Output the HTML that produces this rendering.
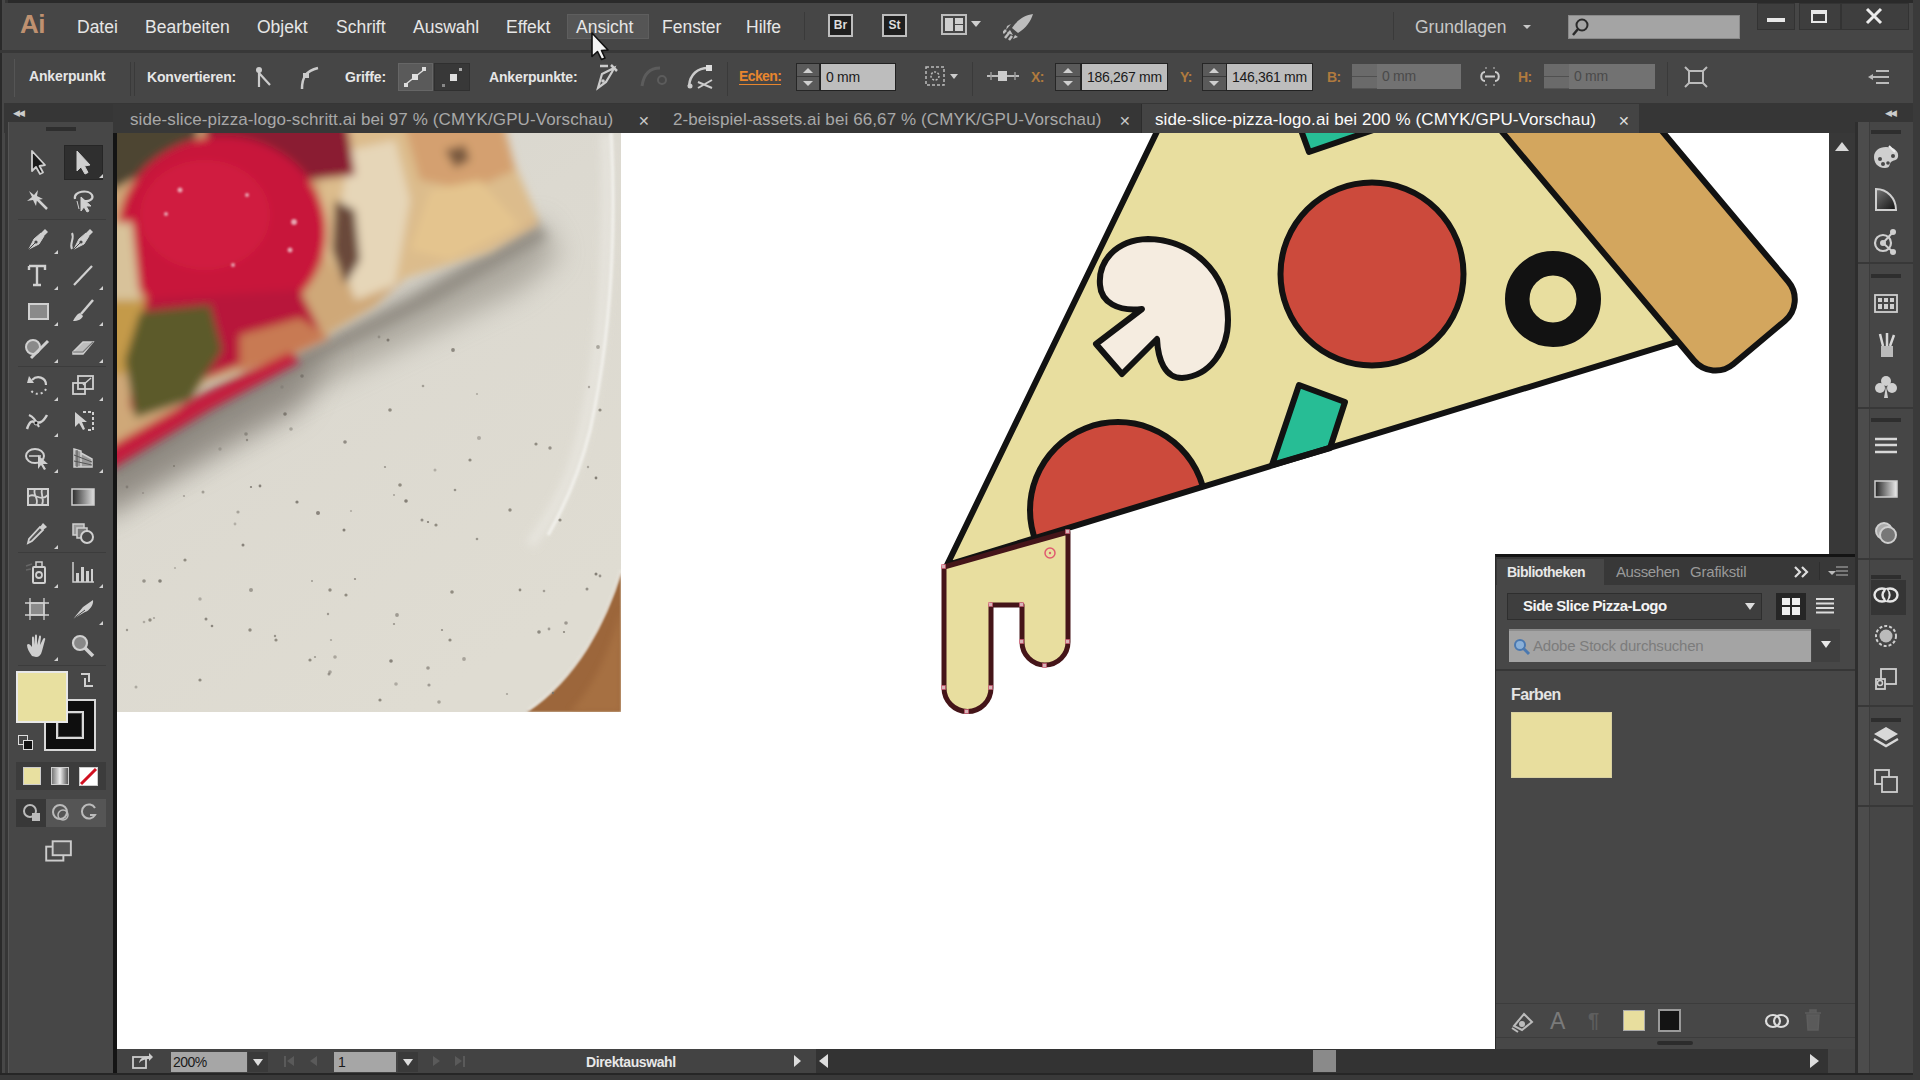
<!DOCTYPE html>
<html><head><meta charset="utf-8">
<style>
*{margin:0;padding:0;box-sizing:border-box}
html,body{width:1920px;height:1080px;overflow:hidden;background:#464646;font-family:"Liberation Sans",sans-serif;color:#e8e8e8}
.a{position:absolute}
.mn{position:absolute;top:17px;font-size:17.5px;line-height:20px;color:#e6e6e6;letter-spacing:0px}
.cb{position:absolute;top:69px;font-size:14px;line-height:16px;color:#e6e6e6;font-weight:bold;letter-spacing:-0.15px}
.tab{position:absolute;top:110px;font-size:17px;line-height:20px;color:#a8a8a8;letter-spacing:0.1px}
.inp{position:absolute;background:#bdbdbd;color:#1a1a1a;font-size:14px;line-height:16px;padding-left:5px;padding-top:5px;letter-spacing:-0.3px;border:1px solid #222}
.spin{position:absolute;background:#5a5a5a;border:1px solid #262626;box-shadow:inset 0 12px 0 #5a5a5a, inset 0 13px 0 #3a3a3a}
.sep{position:absolute;width:2px;background:#3a3a3a;border-right:1px solid #505050}
</style></head><body>
<!-- top border -->
<div class="a" style="left:0;top:0;width:1920px;height:3px;background:#2a2a2a"></div>
<div class="a" style="left:0;top:0;width:8px;height:1080px;background:#474747;border-left:2px solid #2a2a2a;border-right:3px solid #363636"></div>
<!-- menu bar -->
<div class="a" style="left:4px;top:3px;width:1912px;height:47px;background:#464646"></div>
<div class="a" style="left:0;top:50px;width:1920px;height:3px;background:#383838"></div>
<!-- control bar -->
<div class="a" style="left:4px;top:53px;width:1912px;height:50px;background:#464646"></div>
<!-- tab strip -->
<div class="a" style="left:4px;top:103px;width:1912px;height:30px;background:#363636"></div>
<!-- canvas -->
<div class="a" style="left:117px;top:133px;width:1712px;height:916px;background:#fff"></div>

<!-- photo -->
<svg class="a" style="left:117px;top:133px" width="504" height="579" viewBox="117 133 504 579">
<defs>
<filter id="b3" x="-20%" y="-20%" width="140%" height="140%"><feGaussianBlur stdDeviation="3"/></filter>
<filter id="b4" x="-20%" y="-20%" width="140%" height="140%"><feGaussianBlur stdDeviation="4"/></filter>
<filter id="b6" x="-20%" y="-20%" width="140%" height="140%"><feGaussianBlur stdDeviation="6"/></filter>
<filter id="b14" x="-30%" y="-30%" width="160%" height="160%"><feGaussianBlur stdDeviation="14"/></filter>
<filter id="b1"><feGaussianBlur stdDeviation="1"/></filter>
<linearGradient id="pl" x1="0" y1="0" x2="0.6" y2="1"><stop offset="0" stop-color="#d6d4cc"/><stop offset="0.45" stop-color="#dcd9d0"/><stop offset="1" stop-color="#dfdcd2"/></linearGradient>
</defs>
<rect x="117" y="133" width="504" height="579" fill="url(#pl)"/>
<!-- shadow -->
<path d="M95,452 L210,390 L300,348 L400,296 L540,220 L560,255 L520,290 L420,338 L300,395 L210,445 L95,520 Z" fill="#8e897f" filter="url(#b14)" opacity="0.6"/>
<path d="M95,462 L210,398 L300,352 L410,298 L538,222 L548,238 L430,305 L310,365 L220,412 L95,485 Z" fill="#7a756c" filter="url(#b6)" opacity="0.55"/>
<path d="M95,450 L200,400 L290,360 L330,350 L300,410 L200,465 L95,520 Z" fill="#77716a" filter="url(#b14)" opacity="0.55"/>
<!-- wood -->
<path d="M621,572 C605,625 575,680 527,712 L621,712 Z" fill="#9c663a" filter="url(#b1)"/>
<path d="M621,610 C610,650 595,685 570,712 L621,712 Z" fill="#b07a4a" opacity="0.5" filter="url(#b3)"/><path d="M621,570 C606,622 576,678 528,710" fill="none" stroke="#eeece6" stroke-width="2.5" opacity="0.7" filter="url(#b1)"/>
<!-- rim -->
<path d="M611,133 C616,230 612,330 590,430 C580,470 565,505 548,535" fill="none" stroke="#f2f1ec" stroke-width="3.5" filter="url(#b1)"/>
<path d="M606,133 C610,260 602,380 572,470 C560,500 548,520 530,545" fill="none" stroke="#ebe9e3" stroke-width="10" filter="url(#b4)" opacity="0.7"/>
<!-- pizza food -->
<g filter="url(#b4)">
<path d="M95,110 L500,110 L514,163 L538,219 L538,225 L490,252 L406,278 L374,307 L291,356 L207,383 L130,446 L95,460 Z" fill="#cfa878"/>
<path d="M320,110 L500,110 L514,163 L538,219 L490,252 L406,278 L360,300 L320,250 Z" fill="#dcbc8c"/>
<path d="M350,150 L395,140 L410,200 L395,285 L355,300 L335,240 Z" fill="#e6d6b8"/>
<path d="M400,110 L500,110 L515,170 L470,190 L420,180 Z" fill="#d4a070"/>
<path d="M430,190 L480,180 L520,225 L450,260 L410,250 Z" fill="#e4c48e"/>
<path d="M445,150 L465,145 L470,160 L455,168 Z" fill="#7a5a40"/>
<path d="M95,110 L205,110 L185,168 L140,175 L95,200 Z" fill="#4e4430"/>
<path d="M200,110 L345,110 L355,175 L290,182 L210,150 Z" fill="#8a1a32"/>
<ellipse cx="222" cy="232" rx="104" ry="96" fill="#c8163a"/>
<ellipse cx="205" cy="215" rx="65" ry="55" fill="#d01e40"/>
<path d="M130,300 L300,290 L320,330 L280,350 L200,380 L130,410 Z" fill="#b8183a"/>
<path d="M335,200 L355,210 L360,260 L345,285 L332,250 Z" fill="#6a4a3a"/>
<path d="M95,225 L132,222 L140,300 L95,325 Z" fill="#d8c29a"/>
<path d="M95,300 L145,300 L138,370 L95,380 Z" fill="#c49a48"/>
<path d="M140,312 L210,305 L222,350 L190,400 L135,418 L125,360 Z" fill="#5c5a2a"/>
<path d="M240,335 L300,318 L330,338 L290,356 L240,372 Z" fill="#c87a52"/>
<path d="M95,455 L200,395 L290,352 L300,362 L210,410 L110,470 Z" fill="#c41e3c"/>
</g>
<g fill="#f4e0e0" opacity="0.7" filter="url(#b1)">
<circle cx="180" cy="190" r="2.5"/><circle cx="166" cy="214" r="2"/><circle cx="294" cy="222" r="3"/><circle cx="247" cy="195" r="2"/><circle cx="233" cy="265" r="2"/><circle cx="290" cy="250" r="2.5"/>
</g>
<g fill="#7e796e" opacity="0.8">
<circle cx="390" cy="410" r="1.8"/><circle cx="400" cy="485" r="1.8"/><circle cx="330" cy="590" r="1.7"/><circle cx="250" cy="630" r="1.7"/>
<circle cx="452" cy="592" r="1.8"/><circle cx="510" cy="510" r="1.7"/><circle cx="436" cy="525" r="1.6"/><circle cx="380" cy="700" r="1.6"/>
<circle cx="150" cy="620" r="1.7"/><circle cx="560" cy="520" r="1.6"/><circle cx="536" cy="444" r="1.6"/><circle cx="470" cy="460" r="1.6"/>
<circle cx="200" cy="680" r="1.6"/><circle cx="310" cy="660" r="1.6"/><circle cx="520" cy="590" r="1.4"/><circle cx="276" cy="640" r="1.6"/>
<circle cx="346" cy="595" r="1.6"/><circle cx="450" cy="640" r="1.6"/><circle cx="600" cy="410" r="1.6"/><circle cx="185" cy="560" r="1.6"/>
</g>
<g fill="#77726a"><circle cx="282" cy="387" r="1.7" opacity="0.44"/><circle cx="385" cy="467" r="1.1" opacity="0.65"/><circle cx="143" cy="493" r="1.1" opacity="0.45"/><circle cx="331" cy="640" r="1.1" opacity="0.51"/><circle cx="429" cy="685" r="1.6" opacity="0.60"/><circle cx="598" cy="347" r="1.9" opacity="0.54"/><circle cx="275" cy="636" r="1.2" opacity="0.69"/><circle cx="435" cy="470" r="1.5" opacity="0.43"/><circle cx="455" cy="490" r="1.3" opacity="0.69"/><circle cx="345" cy="442" r="1.8" opacity="0.75"/><circle cx="243" cy="545" r="1.5" opacity="0.84"/><circle cx="479" cy="438" r="2.0" opacity="0.46"/><circle cx="328" cy="614" r="1.2" opacity="0.64"/><circle cx="144" cy="581" r="1.8" opacity="0.69"/><circle cx="550" cy="448" r="1.7" opacity="0.70"/><circle cx="406" cy="501" r="1.8" opacity="0.87"/><circle cx="355" cy="579" r="1.1" opacity="0.75"/><circle cx="439" cy="702" r="1.8" opacity="0.54"/><circle cx="312" cy="581" r="1.0" opacity="0.63"/><circle cx="154" cy="618" r="1.1" opacity="0.52"/><circle cx="315" cy="657" r="1.1" opacity="0.62"/><circle cx="391" cy="661" r="1.8" opacity="0.83"/><circle cx="260" cy="486" r="1.4" opacity="0.84"/><circle cx="589" cy="387" r="1.2" opacity="0.52"/><circle cx="238" cy="512" r="1.6" opacity="0.53"/><circle cx="127" cy="487" r="1.4" opacity="0.68"/><circle cx="587" cy="589" r="1.5" opacity="0.71"/><circle cx="453" cy="350" r="1.9" opacity="0.79"/><circle cx="549" cy="629" r="1.4" opacity="0.60"/><circle cx="175" cy="568" r="1.1" opacity="0.43"/><circle cx="174" cy="466" r="1.0" opacity="0.84"/><circle cx="423" cy="386" r="1.3" opacity="0.57"/><circle cx="302" cy="376" r="1.8" opacity="0.90"/><circle cx="351" cy="511" r="1.1" opacity="0.45"/><circle cx="291" cy="429" r="1.8" opacity="0.48"/><circle cx="136" cy="687" r="1.5" opacity="0.47"/><circle cx="388" cy="340" r="1.5" opacity="0.89"/><circle cx="544" cy="591" r="1.3" opacity="0.58"/><circle cx="206" cy="619" r="1.5" opacity="0.79"/><circle cx="285" cy="414" r="1.8" opacity="0.89"/><circle cx="539" cy="632" r="1.8" opacity="0.77"/><circle cx="235" cy="524" r="1.4" opacity="0.41"/><circle cx="251" cy="590" r="2.0" opacity="0.62"/><circle cx="588" cy="467" r="1.2" opacity="0.51"/><circle cx="428" cy="668" r="1.8" opacity="0.64"/><circle cx="442" cy="630" r="1.1" opacity="0.73"/><circle cx="566" cy="623" r="1.8" opacity="0.64"/><circle cx="212" cy="626" r="1.3" opacity="0.80"/><circle cx="596" cy="478" r="1.4" opacity="0.87"/><circle cx="477" cy="394" r="1.1" opacity="0.48"/><circle cx="564" cy="632" r="1.1" opacity="0.81"/><circle cx="600" cy="576" r="1.4" opacity="0.67"/><circle cx="596" cy="574" r="1.5" opacity="0.87"/><circle cx="335" cy="657" r="1.8" opacity="0.51"/><circle cx="247" cy="440" r="1.2" opacity="0.69"/><circle cx="251" cy="487" r="1.1" opacity="0.86"/><circle cx="297" cy="502" r="1.6" opacity="0.85"/><circle cx="329" cy="674" r="1.5" opacity="0.67"/><circle cx="379" cy="337" r="1.4" opacity="0.49"/><circle cx="127" cy="630" r="1.2" opacity="0.64"/><circle cx="477" cy="539" r="1.3" opacity="0.66"/><circle cx="394" cy="624" r="1.1" opacity="0.68"/><circle cx="246" cy="434" r="1.8" opacity="0.65"/><circle cx="397" cy="615" r="1.9" opacity="0.62"/><circle cx="422" cy="520" r="1.5" opacity="0.75"/><circle cx="344" cy="530" r="1.5" opacity="0.87"/><circle cx="464" cy="659" r="1.9" opacity="0.53"/><circle cx="396" cy="684" r="1.8" opacity="0.47"/><circle cx="184" cy="496" r="1.1" opacity="0.52"/><circle cx="160" cy="581" r="1.8" opacity="0.85"/><circle cx="200" cy="599" r="1.7" opacity="0.47"/><circle cx="553" cy="693" r="1.2" opacity="0.88"/><circle cx="318" cy="513" r="2.0" opacity="0.82"/><circle cx="203" cy="492" r="1.5" opacity="0.57"/><circle cx="220" cy="449" r="1.7" opacity="0.41"/><circle cx="394" cy="495" r="1.0" opacity="0.57"/><circle cx="428" cy="522" r="1.1" opacity="0.89"/><circle cx="507" cy="694" r="1.1" opacity="0.53"/><circle cx="144" cy="622" r="1.3" opacity="0.46"/><circle cx="330" cy="672" r="1.8" opacity="0.53"/></g>
</svg>
<!-- pizza art -->
<svg class="a" style="left:0;top:0" width="1920" height="1080" viewBox="0 0 1920 1080">
<defs>
<clipPath id="cv"><rect x="117" y="133" width="1712" height="916"/></clipPath>
<clipPath id="ch"><path d="M947,565 L1182,80 L1460,80 L1720,328.6 Z"/></clipPath>
</defs>
<g clip-path="url(#cv)" stroke="#121212" stroke-linejoin="round">
<path d="M947,565 L1182,80 L1460,80 L1720,328.6 Z" fill="#e8de9f" stroke="none"/>
<g clip-path="url(#ch)"><circle cx="1118" cy="510" r="88" fill="#cc4a3c" stroke-width="6"/></g>
<path d="M1299,385 L1345,402 L1330,448 L1272,465 Z" fill="#27bd95" stroke-width="6"/>
<path d="M1309,152 L1290,100 L1461,100 Z" fill="#27bd95" stroke-width="6"/>
<path d="M1142,309 L1096,344 L1122,374 L1157,339 C1158,360 1165,378 1182,378 C1210,376 1228,350 1228,320 C1228,270 1190,240 1148,239 C1115,240 1098,262 1100,285 C1101,302 1118,312 1142,309 Z" fill="#f5ece0" stroke-width="6"/>
<circle cx="1372" cy="274" r="91.5" fill="#cc4a3c" stroke-width="6"/>
<circle cx="1553" cy="299" r="35.75" fill="none" stroke-width="24.5"/>
<path d="M947,565 L1182,80 M947,565 L1720,328.6" fill="none" stroke-width="6" stroke-linecap="round"/>
<g transform="translate(1712,382) rotate(-40)"><rect x="0" y="-420" width="123" height="420" rx="28" fill="#d3a65e" stroke-width="6"/></g>
<path d="M944,567 L1068,532 L1068,642 A23,23 0 0 1 1022,642 L1022,605 L991,605 L991,688 A23.5,23.5 0 0 1 944,688 Z" fill="#e8de9f" stroke="#451519" stroke-width="5"/>
<g fill="#f0d0d4" stroke="#d86078" stroke-width="0.8" opacity="0.85">
<rect x="941.5" y="564.5" width="4" height="4"/><rect x="1065.5" y="529.5" width="4" height="4"/>
<rect x="1065.5" y="639.5" width="4" height="4"/><rect x="1042.5" y="663.5" width="4" height="4"/>
<rect x="1019.5" y="639.5" width="4" height="4"/><rect x="1019.5" y="602.5" width="4" height="4"/>
<rect x="988.5" y="602.5" width="4" height="4"/><rect x="988.5" y="685.5" width="4" height="4"/>
<rect x="964.5" y="709.5" width="4" height="4"/><rect x="941.5" y="685.5" width="4" height="4"/>
</g>
<circle cx="1050" cy="553" r="5" fill="none" stroke="#e05a70" stroke-width="1.5"/>
<circle cx="1050" cy="553" r="1.2" fill="#e05a70" stroke="none"/>
</g>
</svg>
<!-- vertical scrollbar -->
<div class="a" style="left:1829px;top:133px;width:28px;height:916px;background:#383838"></div>
<!-- status bar -->
<div class="a" style="left:113px;top:1049px;width:1744px;height:24px;background:#333"></div>
<div class="a" style="left:0;top:1073px;width:1920px;height:7px;background:#393939;border-top:2px solid #262626"></div>
<!-- right strip -->
<div class="a" style="left:1857px;top:122px;width:56px;height:951px;background:#464646"></div>
<div class="a" style="left:1913px;top:0;width:7px;height:1080px;background:#3a3a3a"></div>
<!-- left toolbar -->
<div class="a" style="left:8px;top:122px;width:105px;height:951px;background:#474747;border-left:1px solid #555"></div>


<!-- ===== LIBRARIES PANEL ===== -->
<div class="a" style="left:1495px;top:554px;width:360px;height:495px;background:#474747;border-top:3px solid #141414;border-left:1px solid #2a2a2a"></div>
<div class="a" style="left:1496px;top:557px;width:359px;height:28px;background:#383838"></div>
<div class="a" style="left:1497px;top:559px;width:107px;height:26px;background:#474747"></div>
<div class="a" style="left:1507px;top:564px;font-size:14px;font-weight:bold;color:#e8e8e8;letter-spacing:-0.5px">Bibliotheken</div>
<div class="a" style="left:1616px;top:563px;font-size:15px;color:#9a9a9a;letter-spacing:-0.4px">Aussehen</div>
<div class="a" style="left:1690px;top:563px;font-size:15px;color:#9a9a9a;letter-spacing:-0.2px">Grafikstil</div>
<svg class="a" style="left:1792px;top:565px" width="18" height="14" viewBox="0 0 18 14"><path d="M3,2 L8,7 L3,12 M10,2 L15,7 L10,12" fill="none" stroke="#ddd" stroke-width="2.2"/></svg>
<div class="a" style="left:1819px;top:562px;width:1px;height:18px;background:#2e2e2e"></div>
<div class="a" style="left:1828px;top:571px;border-left:4px solid transparent;border-right:4px solid transparent;border-top:4px solid #bbb"></div>
<div class="a" style="left:1836px;top:566px;width:12px;height:2px;background:#777;box-shadow:0 4px 0 #777,0 8px 0 #777"></div>
<!-- dropdown -->
<div class="a" style="left:1507px;top:593px;width:255px;height:27px;background:#3e3e3e;border:1px solid #2e2e2e"></div>
<div class="a" style="left:1523px;top:597px;font-size:15px;font-weight:bold;color:#f4f4f4;letter-spacing:-0.5px">Side Slice Pizza-Logo</div>
<div class="a" style="left:1745px;top:603px;border-left:5px solid transparent;border-right:5px solid transparent;border-top:7px solid #ddd"></div>
<div class="a" style="left:1776px;top:593px;width:30px;height:27px;background:#262626"></div>
<svg class="a" style="left:1781px;top:597px" width="20" height="19" viewBox="0 0 20 19"><rect x="1" y="1" width="8" height="7" fill="#eee"/><rect x="11" y="1" width="8" height="7" fill="#eee"/><rect x="1" y="10" width="8" height="8" fill="#eee"/><rect x="11" y="10" width="8" height="8" fill="#eee"/></svg>
<svg class="a" style="left:1815px;top:597px" width="20" height="19" viewBox="0 0 20 19"><path d="M1,2 L19,2 M1,6.5 L19,6.5 M1,11 L19,11 M1,15.5 L19,15.5" stroke="#ddd" stroke-width="2"/></svg>
<!-- search -->
<div class="a" style="left:1509px;top:629px;width:302px;height:33px;background:#a4a4a4;border-top:2px solid #8c8c8c"></div>
<svg class="a" style="left:1512px;top:637px" width="20" height="20" viewBox="0 0 20 20"><circle cx="8" cy="8" r="5" fill="#8ab0d8" stroke="#4a78b0" stroke-width="2"/><path d="M11,11 L17,17" stroke="#4a78b0" stroke-width="3"/></svg>
<div class="a" style="left:1533px;top:637px;font-size:15px;color:#7c7c7c;letter-spacing:-0.2px">Adobe Stock durchsuchen</div>
<div class="a" style="left:1812px;top:629px;width:28px;height:33px;background:#404040"></div>
<div class="a" style="left:1821px;top:641px;border-left:5px solid transparent;border-right:5px solid transparent;border-top:7px solid #e8e8e8"></div>
<div class="a" style="left:1496px;top:669px;width:359px;height:2px;background:#363636"></div>
<div class="a" style="left:1511px;top:686px;font-size:16px;font-weight:bold;color:#e4e4e4;letter-spacing:-0.6px">Farben</div>
<div class="a" style="left:1511px;top:712px;width:101px;height:66px;background:#e8de9e;border:1px solid #d8d0a0"></div>
<!-- panel bottom -->
<div class="a" style="left:1496px;top:1003px;width:359px;height:1px;background:#3c3c3c"></div>
<svg class="a" style="left:1510px;top:1008px" width="26" height="26" viewBox="0 0 26 26"><path d="M4,18 L14,6 L22,14 L12,22 Z" fill="none" stroke="#bbb" stroke-width="2"/><circle cx="12" cy="16" r="3" fill="#bbb"/><path d="M2,20 L8,24" stroke="#bbb" stroke-width="2"/></svg>
<div class="a" style="left:1550px;top:1008px;font-size:23px;color:#7a7a7a">A</div>
<div class="a" style="left:1588px;top:1009px;font-size:20px;color:#5e5e5e;font-weight:bold">&#182;</div>
<div class="a" style="left:1623px;top:1010px;width:22px;height:21px;background:#e8de9e;border:1px solid #aaa"></div>
<div class="a" style="left:1658px;top:1009px;width:23px;height:23px;background:#141414;border:2px solid #9a9a9a"></div>
<svg class="a" style="left:1763px;top:1007px" width="28" height="26" viewBox="0 0 28 26"><ellipse cx="10" cy="14" rx="7" ry="6" fill="none" stroke="#ddd" stroke-width="2.2"/><ellipse cx="18" cy="14" rx="7" ry="6" fill="none" stroke="#ddd" stroke-width="2.2"/></svg>
<svg class="a" style="left:1802px;top:1007px" width="22" height="26" viewBox="0 0 22 26"><path d="M5,8 L17,8 L16,23 L6,23 Z M3,6 L19,6 M8,6 L8,3 L14,3 L14,6" fill="#5a5a5a" stroke="#5e5e5e" stroke-width="1.5"/></svg>
<div class="a" style="left:1496px;top:1037px;width:359px;height:1px;background:#3c3c3c"></div>
<div class="a" style="left:1657px;top:1041px;width:36px;height:4px;background:#2c2c2c;border-radius:2px"></div>

<!-- ===== RIGHT STRIP ===== -->
<div class="a" style="left:1855px;top:122px;width:3px;height:951px;background:#2e2e2e"></div>
<div class="a" style="left:1858px;top:122px;width:12px;height:951px;background:#4c4c4c;border-right:1px solid #3c3c3c"></div>
<div class="a" style="left:1871px;top:130px;width:30px;height:4px;background:#2e2e2e"></div>
<div class="a" style="left:1871px;top:274px;width:30px;height:4px;background:#2e2e2e"></div>
<div class="a" style="left:1871px;top:418px;width:30px;height:4px;background:#2e2e2e"></div>
<div class="a" style="left:1858px;top:262px;width:55px;height:2px;background:#383838"></div>
<div class="a" style="left:1858px;top:407px;width:55px;height:2px;background:#383838"></div>
<div class="a" style="left:1858px;top:558px;width:55px;height:2px;background:#383838"></div>
<div class="a" style="left:1871px;top:575px;width:30px;height:4px;background:#2e2e2e"></div>
<div class="a" style="left:1858px;top:705px;width:55px;height:2px;background:#383838"></div>
<div class="a" style="left:1871px;top:718px;width:30px;height:4px;background:#2e2e2e"></div>
<div class="a" style="left:1858px;top:805px;width:55px;height:2px;background:#383838"></div>
<div class="a" style="left:1871px;top:580px;width:35px;height:35px;background:#353535"></div>
<svg class="a" style="left:1871px;top:142px" width="30" height="30" viewBox="0 0 30 30"><path d="M15,5 C24,5 28,10 27,15 C26,19 22,18 20,20 C18,23 19,26 14,26 C6,26 3,20 3,15 C3,9 8,5 15,5 Z" fill="#cfcfcf"/><circle cx="9" cy="17" r="2" fill="#474747"/><circle cx="12" cy="22" r="2" fill="#474747"/><circle cx="17" cy="21" r="1.8" fill="#474747"/><circle cx="22" cy="14" r="2" fill="#474747"/><path d="M18,4 L24,10" stroke="#eee" stroke-width="2"/></svg>
<svg class="a" style="left:1871px;top:185px" width="30" height="30" viewBox="0 0 30 30"><defs><linearGradient id="rg" x1="0" y1="0" x2="1" y2="1"><stop offset="0" stop-color="#777"/><stop offset="1" stop-color="#111"/></linearGradient></defs><path d="M5,4 C16,4 25,13 25,25 L5,25 Z" fill="url(#rg)" stroke="#cfcfcf" stroke-width="2"/></svg>
<svg class="a" style="left:1871px;top:226px" width="30" height="30" viewBox="0 0 30 30"><circle cx="12" cy="17" r="8" fill="none" stroke="#cfcfcf" stroke-width="2.2"/><circle cx="12" cy="17" r="3" fill="#cfcfcf"/><path d="M12,17 L22,6 M12,17 L22,26" stroke="#cfcfcf" stroke-width="2"/><circle cx="22" cy="6" r="3" fill="#cfcfcf"/><circle cx="22" cy="26" r="3" fill="#cfcfcf"/></svg>
<svg class="a" style="left:1871px;top:288px" width="30" height="30" viewBox="0 0 30 30"><rect x="4" y="7" width="22" height="17" fill="none" stroke="#cfcfcf" stroke-width="1.8"/><rect x="7" y="10" width="4" height="4" fill="#cfcfcf"/><rect x="13" y="10" width="4" height="4" fill="#cfcfcf"/><rect x="19" y="10" width="4" height="4" fill="#cfcfcf"/><rect x="7" y="16" width="4" height="5" fill="#cfcfcf"/><rect x="13" y="16" width="4" height="5" fill="#cfcfcf"/><rect x="19" y="16" width="4" height="5" fill="#cfcfcf"/></svg>
<svg class="a" style="left:1871px;top:330px" width="30" height="30" viewBox="0 0 30 30"><rect x="10" y="16" width="12" height="11" fill="#bbb"/><path d="M12,16 L9,4 M16,16 L16,3 M19,16 L23,5" stroke="#d8d8d8" stroke-width="2.5"/></svg>
<svg class="a" style="left:1871px;top:372px" width="30" height="30" viewBox="0 0 30 30"><circle cx="15" cy="9" r="5" fill="#cfcfcf"/><circle cx="9" cy="16" r="5" fill="#cfcfcf"/><circle cx="21" cy="16" r="5" fill="#cfcfcf"/><path d="M15,14 L13,26 L17,26 Z" fill="#cfcfcf"/></svg>
<svg class="a" style="left:1871px;top:431px" width="30" height="30" viewBox="0 0 30 30"><path d="M4,8 L26,8 M4,14 L26,14 M4,21 L26,21" stroke="#d8d8d8" stroke-width="2.5"/></svg>
<svg class="a" style="left:1871px;top:474px" width="30" height="30" viewBox="0 0 30 30"><defs><linearGradient id="rg2"><stop offset="0" stop-color="#222"/><stop offset="1" stop-color="#eee"/></linearGradient></defs><rect x="4" y="7" width="22" height="16" fill="url(#rg2)" stroke="#cfcfcf" stroke-width="1.5"/></svg>
<svg class="a" style="left:1871px;top:518px" width="30" height="30" viewBox="0 0 30 30"><circle cx="13" cy="13" r="8" fill="#aaa" stroke="#cfcfcf" stroke-width="2"/><circle cx="17" cy="17" r="8" fill="#777" stroke="#cfcfcf" stroke-width="2"/></svg>
<svg class="a" style="left:1871px;top:580px" width="30" height="30" viewBox="0 0 30 30"><ellipse cx="11" cy="15" rx="7.5" ry="6.5" fill="none" stroke="#e6e6e6" stroke-width="2.4"/><ellipse cx="19" cy="15" rx="7.5" ry="6.5" fill="none" stroke="#e6e6e6" stroke-width="2.4"/><path d="M15,10 C17,12 17,18 15,20" fill="none" stroke="#353535" stroke-width="2"/></svg>
<svg class="a" style="left:1871px;top:621px" width="30" height="30" viewBox="0 0 30 30"><circle cx="15" cy="15" r="10" fill="none" stroke="#cfcfcf" stroke-width="2" stroke-dasharray="3,2"/><circle cx="15" cy="15" r="6.5" fill="#bbb"/></svg>
<svg class="a" style="left:1871px;top:664px" width="30" height="30" viewBox="0 0 30 30"><rect x="10" y="5" width="15" height="15" fill="none" stroke="#cfcfcf" stroke-width="1.8"/><rect x="5" y="15" width="9" height="10" fill="#474747" stroke="#cfcfcf" stroke-width="1.8"/><circle cx="9" cy="19" r="2.5" fill="none" stroke="#cfcfcf" stroke-width="1.5"/></svg>
<svg class="a" style="left:1871px;top:723px" width="30" height="30" viewBox="0 0 30 30"><path d="M15,4 L27,11 L15,18 L3,11 Z" fill="#d8d8d8"/><path d="M3,16 L15,23 L27,16" fill="none" stroke="#d8d8d8" stroke-width="2.5"/></svg>
<svg class="a" style="left:1871px;top:766px" width="30" height="30" viewBox="0 0 30 30"><rect x="4" y="4" width="14" height="14" fill="none" stroke="#cfcfcf" stroke-width="1.8"/><rect x="11" y="11" width="15" height="15" fill="#474747" stroke="#cfcfcf" stroke-width="1.8"/></svg>

<!-- vertical scroll arrow -->
<div class="a" style="left:1835px;top:142px;border-left:7px solid transparent;border-right:7px solid transparent;border-bottom:9px solid #d8d8d8"></div>

<!-- ===== STATUS BAR ===== -->
<div class="a" style="left:117px;top:1049px;width:699px;height:24px;background:#434343"></div><div class="a" style="left:113px;top:133px;width:4px;height:940px;background:#141414"></div>
<svg class="a" style="left:130px;top:1051px" width="24" height="20" viewBox="0 0 24 20"><rect x="3" y="6" width="13" height="11" fill="none" stroke="#ccc" stroke-width="1.8"/><path d="M9,12 C10,7 14,5 19,5 L19,2 L23,6 L19,10 L19,8 C15,8 12,9 9,12 Z" fill="#ccc"/></svg>
<div class="a" style="left:171px;top:1052px;width:76px;height:20px;background:#a6a6a6"></div>
<div class="a" style="left:173px;top:1054px;font-size:14px;color:#1a1a1a;letter-spacing:-0.5px">200%</div>
<div class="a" style="left:248px;top:1052px;width:20px;height:20px;background:#3a3a3a"></div>
<div class="a" style="left:253px;top:1059px;border-left:5px solid transparent;border-right:5px solid transparent;border-top:7px solid #ddd"></div>
<div class="a" style="left:284px;top:1056px;width:2px;height:11px;background:#5a5a5a"></div>
<div class="a" style="left:287px;top:1056px;border-top:5.5px solid transparent;border-bottom:5.5px solid transparent;border-right:7px solid #5a5a5a"></div>
<div class="a" style="left:310px;top:1056px;border-top:5.5px solid transparent;border-bottom:5.5px solid transparent;border-right:7px solid #5a5a5a"></div>
<div class="a" style="left:334px;top:1052px;width:62px;height:20px;background:#a6a6a6"></div>
<div class="a" style="left:338px;top:1054px;font-size:14px;color:#1a1a1a">1</div>
<div class="a" style="left:398px;top:1052px;width:20px;height:20px;background:#3a3a3a"></div>
<div class="a" style="left:403px;top:1059px;border-left:5px solid transparent;border-right:5px solid transparent;border-top:7px solid #ddd"></div>
<div class="a" style="left:433px;top:1056px;border-top:5.5px solid transparent;border-bottom:5.5px solid transparent;border-left:7px solid #5a5a5a"></div>
<div class="a" style="left:455px;top:1056px;border-top:5.5px solid transparent;border-bottom:5.5px solid transparent;border-left:7px solid #5a5a5a"></div>
<div class="a" style="left:463px;top:1056px;width:2px;height:11px;background:#5a5a5a"></div>
<div class="a" style="left:586px;top:1054px;font-size:14px;font-weight:bold;color:#e8e8e8;letter-spacing:-0.4px">Direktauswahl</div>
<div class="a" style="left:794px;top:1055px;border-top:6px solid transparent;border-bottom:6px solid transparent;border-left:7px solid #ddd"></div>
<div class="a" style="left:816px;top:1049px;width:1px;height:24px;background:#333"></div>
<div class="a" style="left:819px;top:1054px;border-top:7px solid transparent;border-bottom:7px solid transparent;border-right:9px solid #ddd"></div>
<div class="a" style="left:1313px;top:1050px;width:23px;height:22px;background:#8a8a8a"></div>
<div class="a" style="left:1810px;top:1054px;border-top:7px solid transparent;border-bottom:7px solid transparent;border-left:9px solid #ddd"></div>
<div class="a" style="left:1828px;top:1049px;width:27px;height:24px;background:#444"></div>
<!-- ===== MENU BAR ===== -->
<div class="a" style="left:20px;top:9px;font-size:26px;line-height:30px;color:#bf9170;font-weight:bold;letter-spacing:-0.5px">Ai</div>
<div class="mn" style="left:77px">Datei</div>
<div class="mn" style="left:145px">Bearbeiten</div>
<div class="mn" style="left:257px">Objekt</div>
<div class="mn" style="left:336px">Schrift</div>
<div class="mn" style="left:413px">Auswahl</div>
<div class="mn" style="left:506px">Effekt</div>
<div class="a" style="left:567px;top:14px;width:82px;height:25px;background:#555;border:1px solid #5e5e5e"></div>
<div class="mn" style="left:576px">Ansicht</div>
<div class="mn" style="left:662px">Fenster</div>
<div class="mn" style="left:746px">Hilfe</div>
<div class="a" style="left:804px;top:12px;width:1px;height:28px;background:#3a3a3a"></div>
<div class="a" style="left:828px;top:14px;width:25px;height:23px;border:2px solid #bdbdbd;background:#1e1e1e;color:#ddd;font-size:12px;font-weight:bold;text-align:center;line-height:19px">Br</div>
<div class="a" style="left:882px;top:14px;width:25px;height:23px;border:2px solid #bdbdbd;background:#1e1e1e;color:#ddd;font-size:12px;font-weight:bold;text-align:center;line-height:19px">St</div>
<div class="a" style="left:941px;top:14px;width:26px;height:21px;border:2px solid #bdbdbd;background:#464646"></div>
<div class="a" style="left:945px;top:18px;width:8px;height:13px;background:#cfcfcf"></div>
<div class="a" style="left:955px;top:18px;width:8px;height:6px;background:#cfcfcf"></div>
<div class="a" style="left:955px;top:25px;width:8px;height:6px;background:#cfcfcf"></div>
<div class="a" style="left:971px;top:21px;width:0;height:0;border-left:5px solid transparent;border-right:5px solid transparent;border-top:6px solid #cfcfcf"></div>
<svg class="a" style="left:1003px;top:12px" width="34" height="30" viewBox="0 0 34 30"><path d="M30,2 C22,3 14,8 9,16 L15,21 C23,16 28,9 30,2 Z M7,18 L4,21 L10,23 Z M12,23 L10,27 L15,25 Z M4,14 L8,12 L3,18 Z" fill="#bdbdbd"/><path d="M6,21 L2,26 M9,24 L6,28 M3,18 L0,21" stroke="#bdbdbd" stroke-width="2.5"/></svg>
<div class="a" style="left:1393px;top:12px;width:1px;height:28px;background:#3a3a3a"></div>
<div class="mn" style="left:1415px;color:#c8c8c8">Grundlagen</div>
<div class="a" style="left:1523px;top:25px;width:0;height:0;border-left:4px solid transparent;border-right:4px solid transparent;border-top:4px solid #c8c8c8"></div>
<div class="a" style="left:1568px;top:15px;width:172px;height:24px;background:#a4a4a4;border:1px solid #8a8a8a"></div>
<svg class="a" style="left:1569px;top:15px" width="24" height="24" viewBox="0 0 24 24"><circle cx="13" cy="10" r="5.5" fill="none" stroke="#2a2a2a" stroke-width="2"/><path d="M9,14 L4,20" stroke="#2a2a2a" stroke-width="2.5"/></svg>
<div class="a" style="left:1757px;top:3px;width:38px;height:27px;background:#3e3e3e;border:1px solid #333"></div>
<div class="a" style="left:1767px;top:18px;width:18px;height:4px;background:#e8e8e8"></div>
<div class="a" style="left:1799px;top:3px;width:42px;height:27px;background:#3e3e3e;border:1px solid #333"></div>
<div class="a" style="left:1811px;top:10px;width:16px;height:13px;border:2px solid #e8e8e8;border-top-width:4px"></div>
<div class="a" style="left:1841px;top:3px;width:68px;height:27px;background:#3e3e3e;border:1px solid #333"></div>
<svg class="a" style="left:1864px;top:7px" width="20" height="18" viewBox="0 0 20 18"><path d="M3,2 L17,16 M17,2 L3,16" stroke="#ececec" stroke-width="3"/></svg>

<!-- ===== CONTROL BAR ===== -->
<div class="a" style="left:14px;top:59px;width:1px;height:38px;background:#555"></div>
<div class="cb" style="left:29px;top:68px">Ankerpunkt</div>
<div class="a" style="left:130px;top:62px;width:1px;height:34px;background:#3a3a3a"></div>
<div class="a" style="left:134px;top:62px;width:1px;height:34px;background:#3a3a3a"></div>
<div class="cb" style="left:147px">Konvertieren:</div>
<svg class="a" style="left:250px;top:63px" width="26" height="28" viewBox="0 0 26 28"><circle cx="9" cy="7" r="3" fill="#ccc"/><path d="M9,7 L9,24 M9,10 L20,22" stroke="#ccc" stroke-width="2.2"/></svg>
<svg class="a" style="left:296px;top:63px" width="26" height="28" viewBox="0 0 26 28"><path d="M6,26 C6,14 10,8 22,5" fill="none" stroke="#ccc" stroke-width="2.5"/><rect x="7" y="10" width="6" height="5" fill="#ccc"/></svg>
<div class="cb" style="left:345px">Griffe:</div>
<div class="a" style="left:398px;top:63px;width:35px;height:28px;background:#5a5a5a;border:1px solid #666"></div>
<svg class="a" style="left:398px;top:63px" width="35" height="28" viewBox="0 0 35 28"><rect x="14" y="11" width="6" height="6" fill="#e0e0e0"/><path d="M8,21 L27,6" stroke="#ddd" stroke-width="1.5"/><rect x="24" y="4" width="4" height="4" fill="#ddd"/><rect x="6" y="20" width="4" height="4" fill="#ddd"/></svg>
<div class="a" style="left:434px;top:63px;width:36px;height:28px;background:#383838;border:1px solid #303030"></div>
<svg class="a" style="left:434px;top:63px" width="36" height="28" viewBox="0 0 36 28"><rect x="16" y="11" width="7" height="7" fill="#e0e0e0"/><rect x="25" y="5" width="3" height="3" fill="#aaa"/><rect x="8" y="21" width="3" height="3" fill="#888"/></svg>
<div class="cb" style="left:489px">Ankerpunkte:</div>
<svg class="a" style="left:592px;top:62px" width="28" height="30" viewBox="0 0 28 30"><path d="M22,6 L10,12 L6,26 L14,20 L20,10 Z" fill="none" stroke="#ccc" stroke-width="2.2"/><path d="M8,4 L16,4 M19,3 L25,9" stroke="#ccc" stroke-width="2.5"/><circle cx="11" cy="19" r="1.8" fill="#ccc"/></svg>
<svg class="a" style="left:638px;top:62px" width="30" height="30" viewBox="0 0 30 30"><path d="M4,24 C6,10 14,6 22,6" fill="none" stroke="#5c5c5c" stroke-width="3"/><circle cx="24" cy="18" r="4" fill="none" stroke="#5c5c5c" stroke-width="2"/></svg>
<svg class="a" style="left:684px;top:62px" width="32" height="30" viewBox="0 0 32 30"><path d="M5,24 C6,12 14,6 24,6" fill="none" stroke="#ccc" stroke-width="2.5"/><rect x="22" y="3" width="6" height="6" fill="#ddd"/><circle cx="6" cy="24" r="2.5" fill="#ccc"/><path d="M14,20 L28,26 M14,26 L28,18" stroke="#ccc" stroke-width="2"/></svg>
<div class="a" style="left:727px;top:62px;width:1px;height:34px;background:#3a3a3a"></div>
<div class="a" style="left:739px;top:68px;font-size:14px;font-weight:bold;color:#e8862e;letter-spacing:-0.6px;border-bottom:1px solid #e8862e;line-height:16px">Ecken:</div>
<div class="spin" style="left:796px;top:63px;width:24px;height:28px"></div>
<div class="a" style="left:803px;top:68px;border-left:5px solid transparent;border-right:5px solid transparent;border-bottom:5px solid #cfcfcf"></div>
<div class="a" style="left:803px;top:81px;border-left:5px solid transparent;border-right:5px solid transparent;border-top:5px solid #cfcfcf"></div>
<div class="inp" style="left:820px;top:63px;width:76px;height:28px">0 mm</div>
<svg class="a" style="left:922px;top:63px" width="42" height="28" viewBox="0 0 42 28"><rect x="4" y="4" width="18" height="18" fill="none" stroke="#bbb" stroke-width="1.5" stroke-dasharray="3,2"/><circle cx="13" cy="13" r="4" fill="none" stroke="#bbb" stroke-width="1.5" stroke-dasharray="2,1.5"/><path d="M28,11 L36,11 L32,16 Z" fill="#ccc"/></svg>
<div class="a" style="left:972px;top:62px;width:1px;height:34px;background:#3a3a3a"></div>
<svg class="a" style="left:985px;top:64px" width="36" height="24" viewBox="0 0 36 24"><path d="M2,12 L34,12" stroke="#bbb" stroke-width="2"/><rect x="13" y="7" width="9" height="10" fill="#ccc"/><path d="M6,8 L6,16 M30,8 L30,16" stroke="#999" stroke-width="1.5"/></svg>
<div class="a" style="left:1031px;top:68px;font-size:14px;font-weight:bold;color:#b07a3e;letter-spacing:-0.6px;line-height:18px">X:</div>
<div class="spin" style="left:1055px;top:63px;width:26px;height:28px"></div>
<div class="a" style="left:1063px;top:68px;border-left:5px solid transparent;border-right:5px solid transparent;border-bottom:5px solid #cfcfcf"></div>
<div class="a" style="left:1063px;top:81px;border-left:5px solid transparent;border-right:5px solid transparent;border-top:5px solid #cfcfcf"></div>
<div class="inp" style="left:1081px;top:63px;width:87px;height:28px">186,267 mm</div>
<div class="a" style="left:1180px;top:68px;font-size:14px;font-weight:bold;color:#b07a3e;letter-spacing:-0.6px;line-height:18px">Y:</div>
<div class="spin" style="left:1202px;top:63px;width:25px;height:28px"></div>
<div class="a" style="left:1209px;top:68px;border-left:5px solid transparent;border-right:5px solid transparent;border-bottom:5px solid #cfcfcf"></div>
<div class="a" style="left:1209px;top:81px;border-left:5px solid transparent;border-right:5px solid transparent;border-top:5px solid #cfcfcf"></div>
<div class="inp" style="left:1226px;top:63px;width:87px;height:28px">146,361 mm</div>
<div class="a" style="left:1327px;top:68px;font-size:14px;font-weight:bold;color:#b07a3e;letter-spacing:-0.6px;line-height:18px">B:</div>
<div class="a" style="left:1352px;top:64px;width:25px;height:25px;background:#6a6a6a;border-bottom:1px solid #555"></div><div class="a" style="left:1352px;top:76px;width:25px;height:1px;background:#505050"></div>
<div class="inp" style="left:1377px;top:64px;width:84px;height:25px;background:#727272;color:#4a4a4a;border:none;padding-top:4px">0 mm</div>
<svg class="a" style="left:1476px;top:64px" width="28" height="26" viewBox="0 0 28 26"><path d="M9,8 C4,8 4,17 9,17 M19,8 C24,8 24,17 19,17 M9,12.5 L19,12.5" fill="none" stroke="#ccc" stroke-width="2"/><path d="M10,3 L10,5 M18,3 L18,5 M10,20 L10,22 M18,20 L18,22" stroke="#999" stroke-width="1.5"/></svg>
<div class="a" style="left:1518px;top:68px;font-size:14px;font-weight:bold;color:#b07a3e;letter-spacing:-0.6px;line-height:18px">H:</div>
<div class="a" style="left:1544px;top:64px;width:25px;height:25px;background:#6a6a6a;border-bottom:1px solid #555"></div><div class="a" style="left:1544px;top:76px;width:25px;height:1px;background:#505050"></div>
<div class="inp" style="left:1569px;top:64px;width:86px;height:25px;background:#727272;color:#4a4a4a;border:none;padding-top:4px">0 mm</div>
<div class="a" style="left:1667px;top:62px;width:1px;height:34px;background:#3a3a3a"></div>
<svg class="a" style="left:1682px;top:64px" width="28" height="26" viewBox="0 0 28 26"><rect x="7" y="7" width="14" height="12" fill="none" stroke="#bbb" stroke-width="2"/><path d="M3,3 L8,8 M25,3 L20,8 M3,23 L8,18 M25,23 L20,18" stroke="#bbb" stroke-width="2"/></svg>
<svg class="a" style="left:1866px;top:66px" width="26" height="22" viewBox="0 0 26 22"><path d="M10,5 L23,5 M4,11 L23,11 M10,17 L23,17" stroke="#bbb" stroke-width="2"/><path d="M2,11 L7,8 L7,14 Z" fill="#bbb"/></svg>

<!-- ===== TAB STRIP ===== -->
<div class="a" style="left:13px;top:108px;color:#ccc;font-size:9px;letter-spacing:-2px">&#9664;&#9664;</div>
<div class="a" style="left:1885px;top:108px;color:#ccc;font-size:9px;letter-spacing:-2px">&#9664;&#9664;</div>
<div class="a" style="left:113px;top:104px;width:547px;height:29px;background:#383838"></div>
<div class="tab" style="left:130px">side-slice-pizza-logo-schritt.ai bei 97 % (CMYK/GPU-Vorschau)</div>
<div class="tab" style="left:638px;font-size:14px;color:#c8c8c8;top:111px">&#x2715;</div>
<div class="tab" style="left:673px">2-beispiel-assets.ai bei 66,67 % (CMYK/GPU-Vorschau)</div>
<div class="tab" style="left:1119px;font-size:14px;color:#c8c8c8;top:111px">&#x2715;</div>
<div class="a" style="left:1141px;top:104px;width:498px;height:29px;background:#444;border-left:1px solid #2c2c2c"></div>
<div class="tab" style="left:1155px;color:#fafafa">side-slice-pizza-logo.ai bei 200 % (CMYK/GPU-Vorschau)</div>
<div class="tab" style="left:1618px;font-size:14px;color:#ddd;top:111px">&#x2715;</div>
<!-- ===== LEFT TOOLBAR ===== -->
<div class="a" style="left:46px;top:127px;width:30px;height:4px;background:#2e2e2e"></div>
<div class="a" style="left:64px;top:145px;width:39px;height:35px;background:#2f2f2f;border:1px solid #262626"></div>
<svg class="a" style="left:24px;top:148px" width="28" height="28" viewBox="0 0 28 28"><path d="M8,3 L8,23 L12,19 L16,26 L19,24.5 L15.5,18 L21,17 Z" fill="#1a1a1a" stroke="#cfcfcf" stroke-width="1.8" stroke-linejoin="round"/></svg>
<svg class="a" style="left:69px;top:148px" width="28" height="28" viewBox="0 0 28 28"><path d="M8,3 L8,23 L12,19 L16,26 L19,24.5 L15.5,18 L21,17 Z" fill="#cfcfcf" stroke="#cfcfcf" stroke-width="1" stroke-linejoin="round"/></svg>
<div class="a" style="left:99px;top:174px;border-left:4px solid transparent;border-bottom:4px solid #d0d0d0"></div>
<svg class="a" style="left:23px;top:185px" width="28" height="28" viewBox="0 0 28 28"><path d="M6,6 L9,12 L4,16 L10,15 L13,21 L14,15 L20,14 L14,11 L15,5 L11,10 Z" fill="#d0d0d0"/><path d="M14,14 L24,24" stroke="#d0d0d0" stroke-width="2.5"/></svg>
<svg class="a" style="left:69px;top:185px" width="28" height="28" viewBox="0 0 28 28"><path d="M6,14 C4,6 20,4 23,10 C25,14 20,17 15,16" fill="none" stroke="#d0d0d0" stroke-width="2.2"/><path d="M8,16 L10,24 M12,12 L12,26 L15,22 L18,27 L20,26 L17,21 L22,21 Z" fill="#d0d0d0" stroke="#d0d0d0" stroke-width="1"/></svg>
<div class="a" style="left:18px;top:219px;width:88px;height:1px;background:#3c3c3c"></div>
<svg class="a" style="left:24px;top:225px" width="28" height="28" viewBox="0 0 28 28"><path d="M21,4 L24,7 L20,11 L17,8 Z" fill="#d0d0d0"/><path d="M17,8 L20,11 L15,19 L5,24 L10,14 Z" fill="#cfcfcf" stroke="#cfcfcf" stroke-width="1"/><circle cx="12" cy="17" r="1.6" fill="#474747"/><path d="M5,24 L12,17" stroke="#474747" stroke-width="1"/></svg>
<svg class="a" style="left:69px;top:225px" width="28" height="28" viewBox="0 0 28 28"><path d="M21,4 L24,7 L20,11 L17,8 Z" fill="#d0d0d0"/><path d="M17,8 L20,11 L15,19 L5,24 L10,14 Z" fill="#cfcfcf" stroke="#cfcfcf" stroke-width="1"/><circle cx="12" cy="17" r="1.6" fill="#474747"/><path d="M5,24 L12,17" stroke="#474747" stroke-width="1"/><path d="M3,24 C0,18 6,14 3,8" fill="none" stroke="#cfcfcf" stroke-width="2"/></svg>
<div class="a" style="left:54px;top:250px;border-left:4px solid transparent;border-bottom:4px solid #d0d0d0"></div>
<svg class="a" style="left:23px;top:261px" width="28" height="28" viewBox="0 0 28 28"><path d="M6,5 L22,5 L22,9 M6,5 L6,9 M14,5 L14,24 M10,24 L18,24" fill="none" stroke="#d0d0d0" stroke-width="2.4"/></svg>
<svg class="a" style="left:69px;top:261px" width="28" height="28" viewBox="0 0 28 28"><path d="M5,24 L23,5" stroke="#d0d0d0" stroke-width="2.2"/></svg>
<div class="a" style="left:54px;top:286px;border-left:4px solid transparent;border-bottom:4px solid #d0d0d0"></div>
<div class="a" style="left:99px;top:286px;border-left:4px solid transparent;border-bottom:4px solid #d0d0d0"></div>
<svg class="a" style="left:24px;top:297px" width="28" height="28" viewBox="0 0 28 28"><rect x="5" y="7" width="19" height="15" fill="#8a8a8a" stroke="#d0d0d0" stroke-width="2"/></svg>
<svg class="a" style="left:69px;top:297px" width="28" height="28" viewBox="0 0 28 28"><path d="M24,3 L12,17" stroke="#d0d0d0" stroke-width="2.5"/><path d="M11,16 C8,17 6,20 4,24 C9,24 13,22 14,19 Z" fill="#d0d0d0"/></svg>
<div class="a" style="left:54px;top:322px;border-left:4px solid transparent;border-bottom:4px solid #d0d0d0"></div>
<div class="a" style="left:99px;top:322px;border-left:4px solid transparent;border-bottom:4px solid #d0d0d0"></div>
<svg class="a" style="left:23px;top:334px" width="28" height="28" viewBox="0 0 28 28"><circle cx="10" cy="13" r="7" fill="#8a8a8a" stroke="#d0d0d0" stroke-width="2"/><path d="M8,24 L25,7" stroke="#d0d0d0" stroke-width="3"/></svg>
<svg class="a" style="left:69px;top:334px" width="28" height="28" viewBox="0 0 28 28"><path d="M4,18 L14,8 L24,8 L14,20 L4,20 Z" fill="#bdbdbd" stroke="#d0d0d0" stroke-width="1.5"/><path d="M4,18 L14,18 L24,8" stroke="#777" stroke-width="1.2" fill="none"/></svg>
<div class="a" style="left:54px;top:359px;border-left:4px solid transparent;border-bottom:4px solid #d0d0d0"></div>
<div class="a" style="left:99px;top:359px;border-left:4px solid transparent;border-bottom:4px solid #d0d0d0"></div>
<div class="a" style="left:18px;top:366px;width:88px;height:1px;background:#3c3c3c"></div>
<svg class="a" style="left:24px;top:371px" width="28" height="28" viewBox="0 0 28 28"><path d="M8,9 C13,4 22,6 22,14" fill="none" stroke="#d0d0d0" stroke-width="2.2"/><path d="M5,5 L10,12 L3,12 Z" fill="#d0d0d0"/><path d="M22,18 A9,9 0 0 1 6,18" fill="none" stroke="#d0d0d0" stroke-width="2" stroke-dasharray="2,3"/></svg>
<svg class="a" style="left:69px;top:371px" width="28" height="28" viewBox="0 0 28 28"><rect x="4" y="12" width="12" height="11" fill="none" stroke="#d0d0d0" stroke-width="1.8"/><rect x="9" y="5" width="15" height="13" fill="none" stroke="#d0d0d0" stroke-width="1.8"/><path d="M14,14 L22,7" stroke="#d0d0d0" stroke-width="1.5"/></svg>
<div class="a" style="left:54px;top:397px;border-left:4px solid transparent;border-bottom:4px solid #d0d0d0"></div>
<div class="a" style="left:99px;top:397px;border-left:4px solid transparent;border-bottom:4px solid #d0d0d0"></div>
<svg class="a" style="left:23px;top:407px" width="28" height="28" viewBox="0 0 28 28"><path d="M4,22 C10,4 14,26 24,8" fill="none" stroke="#d0d0d0" stroke-width="2.5"/><path d="M6,8 C10,10 12,12 16,20" fill="none" stroke="#d0d0d0" stroke-width="2"/><circle cx="13" cy="16" r="2" fill="#1e1e1e" stroke="#d0d0d0"/></svg>
<svg class="a" style="left:69px;top:407px" width="28" height="28" viewBox="0 0 28 28"><path d="M6,5 L6,20 L10,16 L14,23 L16,22 L13,15 L18,15 Z" fill="#d0d0d0"/><path d="M14,5 L24,5 L24,23 L17,23" fill="none" stroke="#d0d0d0" stroke-width="2" stroke-dasharray="3,2"/></svg>
<div class="a" style="left:54px;top:433px;border-left:4px solid transparent;border-bottom:4px solid #d0d0d0"></div>
<svg class="a" style="left:23px;top:443px" width="28" height="28" viewBox="0 0 28 28"><ellipse cx="12" cy="13" rx="9" ry="7" fill="none" stroke="#d0d0d0" stroke-width="2"/><path d="M6,13 L18,13" stroke="#d0d0d0" stroke-width="1.5"/><path d="M15,12 L15,26 L18,22 L21,27 L23,26 L20,21 L25,21 Z" fill="#d0d0d0"/></svg>
<svg class="a" style="left:69px;top:443px" width="28" height="28" viewBox="0 0 28 28"><path d="M5,24 L5,6 L12,8 L12,24 Z M12,10 L23,16 L23,24 L12,24" fill="#999" stroke="#d0d0d0" stroke-width="1.5"/><path d="M5,12 L23,19 M5,18 L23,22 M8,7 L8,24" stroke="#555" stroke-width="1"/></svg>
<div class="a" style="left:54px;top:469px;border-left:4px solid transparent;border-bottom:4px solid #d0d0d0"></div>
<div class="a" style="left:99px;top:469px;border-left:4px solid transparent;border-bottom:4px solid #d0d0d0"></div>
<svg class="a" style="left:24px;top:483px" width="28" height="28" viewBox="0 0 28 28"><rect x="4" y="6" width="20" height="16" fill="#555" stroke="#d0d0d0" stroke-width="2"/><path d="M4,14 C10,8 16,20 24,12 M11,6 C8,12 16,16 12,22 M18,6 C16,12 21,16 18,22" fill="none" stroke="#d0d0d0" stroke-width="1.8"/></svg>
<svg class="a" style="left:70px;top:486px" width="26" height="22" viewBox="0 0 26 22"><defs><linearGradient id="tg"><stop offset="0" stop-color="#2a2a2a"/><stop offset="1" stop-color="#e0e0e0"/></linearGradient></defs><rect x="2" y="3" width="22" height="16" fill="url(#tg)" stroke="#cfcfcf" stroke-width="1.5"/></svg>
<svg class="a" style="left:23px;top:519px" width="28" height="28" viewBox="0 0 28 28"><path d="M20,4 L24,8 L20,11 L17,8 Z" fill="#d0d0d0"/><path d="M17,8 L20,11 L9,22 L5,24 L6,20 Z" fill="#555" stroke="#d0d0d0" stroke-width="1.8"/></svg>
<svg class="a" style="left:69px;top:519px" width="28" height="28" viewBox="0 0 28 28"><rect x="4" y="5" width="11" height="11" fill="#999" stroke="#d0d0d0" stroke-width="1.5"/><rect x="8" y="9" width="10" height="10" fill="#777" stroke="#d0d0d0" stroke-width="1.5"/><circle cx="18" cy="18" r="6" fill="#474747" stroke="#d0d0d0" stroke-width="2"/></svg>
<div class="a" style="left:54px;top:545px;border-left:4px solid transparent;border-bottom:4px solid #d0d0d0"></div>
<div class="a" style="left:18px;top:552px;width:88px;height:1px;background:#3c3c3c"></div>
<svg class="a" style="left:24px;top:558px" width="28" height="28" viewBox="0 0 28 28"><rect x="9" y="9" width="12" height="16" rx="1" fill="none" stroke="#d0d0d0" stroke-width="2"/><rect x="12" y="4" width="6" height="5" fill="none" stroke="#d0d0d0" stroke-width="1.5"/><circle cx="15" cy="17" r="3" fill="none" stroke="#d0d0d0" stroke-width="1.8"/><path d="M2,8 L8,6 M2,12 L7,11" stroke="#666" stroke-width="1.5"/></svg>
<svg class="a" style="left:69px;top:558px" width="28" height="28" viewBox="0 0 28 28"><path d="M4,4 L4,24 L25,24" fill="none" stroke="#d0d0d0" stroke-width="1.5"/><rect x="7" y="15" width="3" height="9" fill="#d0d0d0"/><rect x="12" y="9" width="3" height="15" fill="#d0d0d0"/><rect x="17" y="13" width="3" height="11" fill="#d0d0d0"/><rect x="22" y="11" width="2" height="13" fill="#d0d0d0"/></svg>
<div class="a" style="left:54px;top:584px;border-left:4px solid transparent;border-bottom:4px solid #d0d0d0"></div>
<div class="a" style="left:99px;top:584px;border-left:4px solid transparent;border-bottom:4px solid #d0d0d0"></div>
<svg class="a" style="left:23px;top:595px" width="28" height="28" viewBox="0 0 28 28"><rect x="7" y="8" width="14" height="12" fill="#8a8a8a" stroke="#d0d0d0" stroke-width="1.5"/><path d="M7,3 L7,25 M21,3 L21,25 M2,8 L26,8 M2,20 L26,20" stroke="#d0d0d0" stroke-width="1.3"/></svg>
<svg class="a" style="left:69px;top:595px" width="28" height="28" viewBox="0 0 28 28"><path d="M4,24 L14,12 L24,5 C25,10 20,16 16,17 Z" fill="#d0d0d0"/><path d="M4,24 L16,15" stroke="#474747" stroke-width="1"/></svg>
<div class="a" style="left:99px;top:621px;border-left:4px solid transparent;border-bottom:4px solid #d0d0d0"></div>
<svg class="a" style="left:24px;top:632px" width="28" height="28" viewBox="0 0 28 28"><path d="M8,24 C5,20 3,16 3,13 C4,11 6,12 8,15 L8,6 C8,4 10,4 10,6 L10,13 L11,4 C11,2 13,2 13,4 L13,13 L15,5 C15,3 17,3 17,5 L16,13 L19,7 C20,5 22,6 21,8 L18,19 C17,23 15,25 12,25 Z" fill="#cfcfcf"/></svg>
<svg class="a" style="left:69px;top:632px" width="28" height="28" viewBox="0 0 28 28"><circle cx="11" cy="11" r="7" fill="#888" stroke="#d0d0d0" stroke-width="2.2"/><path d="M16,16 L24,24" stroke="#d0d0d0" stroke-width="3.5"/></svg>
<div class="a" style="left:54px;top:657px;border-left:4px solid transparent;border-bottom:4px solid #d0d0d0"></div>
<div class="a" style="left:18px;top:665px;width:88px;height:1px;background:#3c3c3c"></div>
<div class="a" style="left:44px;top:699px;width:52px;height:52px;background:#0e0e0e;border:2px solid #d8d8d8"></div>
<div class="a" style="left:56px;top:711px;width:28px;height:28px;border:2px solid #d8d8d8;background:#474747"></div>
<div class="a" style="left:59px;top:714px;width:22px;height:22px;background:#0e0e0e"></div>
<div class="a" style="left:16px;top:671px;width:52px;height:52px;background:#e8e0a0;border:2px solid #e8e8e8"></div>
<svg class="a" style="left:75px;top:666px" width="28" height="28" viewBox="0 0 28 28"><path d="M6,8 L14,8 L14,16 M18,20 L10,20 L10,12" fill="none" stroke="#d0d0d0" stroke-width="2"/></svg>
<div class="a" style="left:18px;top:735px;width:10px;height:10px;border:1.5px solid #ddd;background:#474747"></div><div class="a" style="left:23px;top:740px;width:10px;height:10px;background:#111;border:1.5px solid #ddd"></div>
<div class="a" style="left:16px;top:762px;width:90px;height:28px;background:#3c3c3c"></div>
<div class="a" style="left:23px;top:767px;width:18px;height:18px;background:#e8e0a0;border:1px solid #ccc"></div>
<div class="a" style="left:51px;top:767px;width:18px;height:18px;background:linear-gradient(90deg,#777,#eee,#555);border:1px solid #ccc"></div>
<svg class="a" style="left:79px;top:767px" width="19" height="19" viewBox="0 0 19 19"><rect x="0.5" y="0.5" width="18" height="18" fill="#fff" stroke="#ccc"/><path d="M2,17 L17,2" stroke="#d01020" stroke-width="3"/></svg>
<div class="a" style="left:16px;top:799px;width:90px;height:28px;background:#555"></div>
<div class="a" style="left:16px;top:799px;width:30px;height:28px;background:#383838"></div>
<svg class="a" style="left:18px;top:799px" width="28" height="28" viewBox="0 0 28 28"><circle cx="12" cy="12" r="6" fill="none" stroke="#bbb" stroke-width="2"/><rect x="14" y="14" width="8" height="8" fill="#bbb"/></svg>
<svg class="a" style="left:48px;top:799px" width="28" height="28" viewBox="0 0 28 28"><circle cx="12" cy="13" r="7" fill="none" stroke="#bbb" stroke-width="2"/><circle cx="15" cy="16" r="5" fill="none" stroke="#bbb" stroke-width="1.5"/></svg>
<svg class="a" style="left:76px;top:799px" width="28" height="28" viewBox="0 0 28 28"><path d="M19,9 A7,7 0 1 0 19,16 L14,16" fill="none" stroke="#bbb" stroke-width="2"/></svg>
<svg class="a" style="left:41px;top:837px" width="34" height="30" viewBox="0 0 28 28"><rect x="3" y="9" width="16" height="13" fill="#474747" stroke="#ccc" stroke-width="1.8"/><rect x="9" y="4" width="17" height="13" fill="#555" stroke="#ccc" stroke-width="1.8"/></svg>
<svg class="a" style="left:585px;top:28px" width="30" height="40" viewBox="585 28 30 40"><path d="M592,33 L592,56.5 L597.5,51.5 L601.5,59.5 L605,58 L601.5,50.5 L608,50 Z" fill="#f4f4f4" stroke="#111" stroke-width="1.6" stroke-linejoin="round"/></svg>
</body></html>
